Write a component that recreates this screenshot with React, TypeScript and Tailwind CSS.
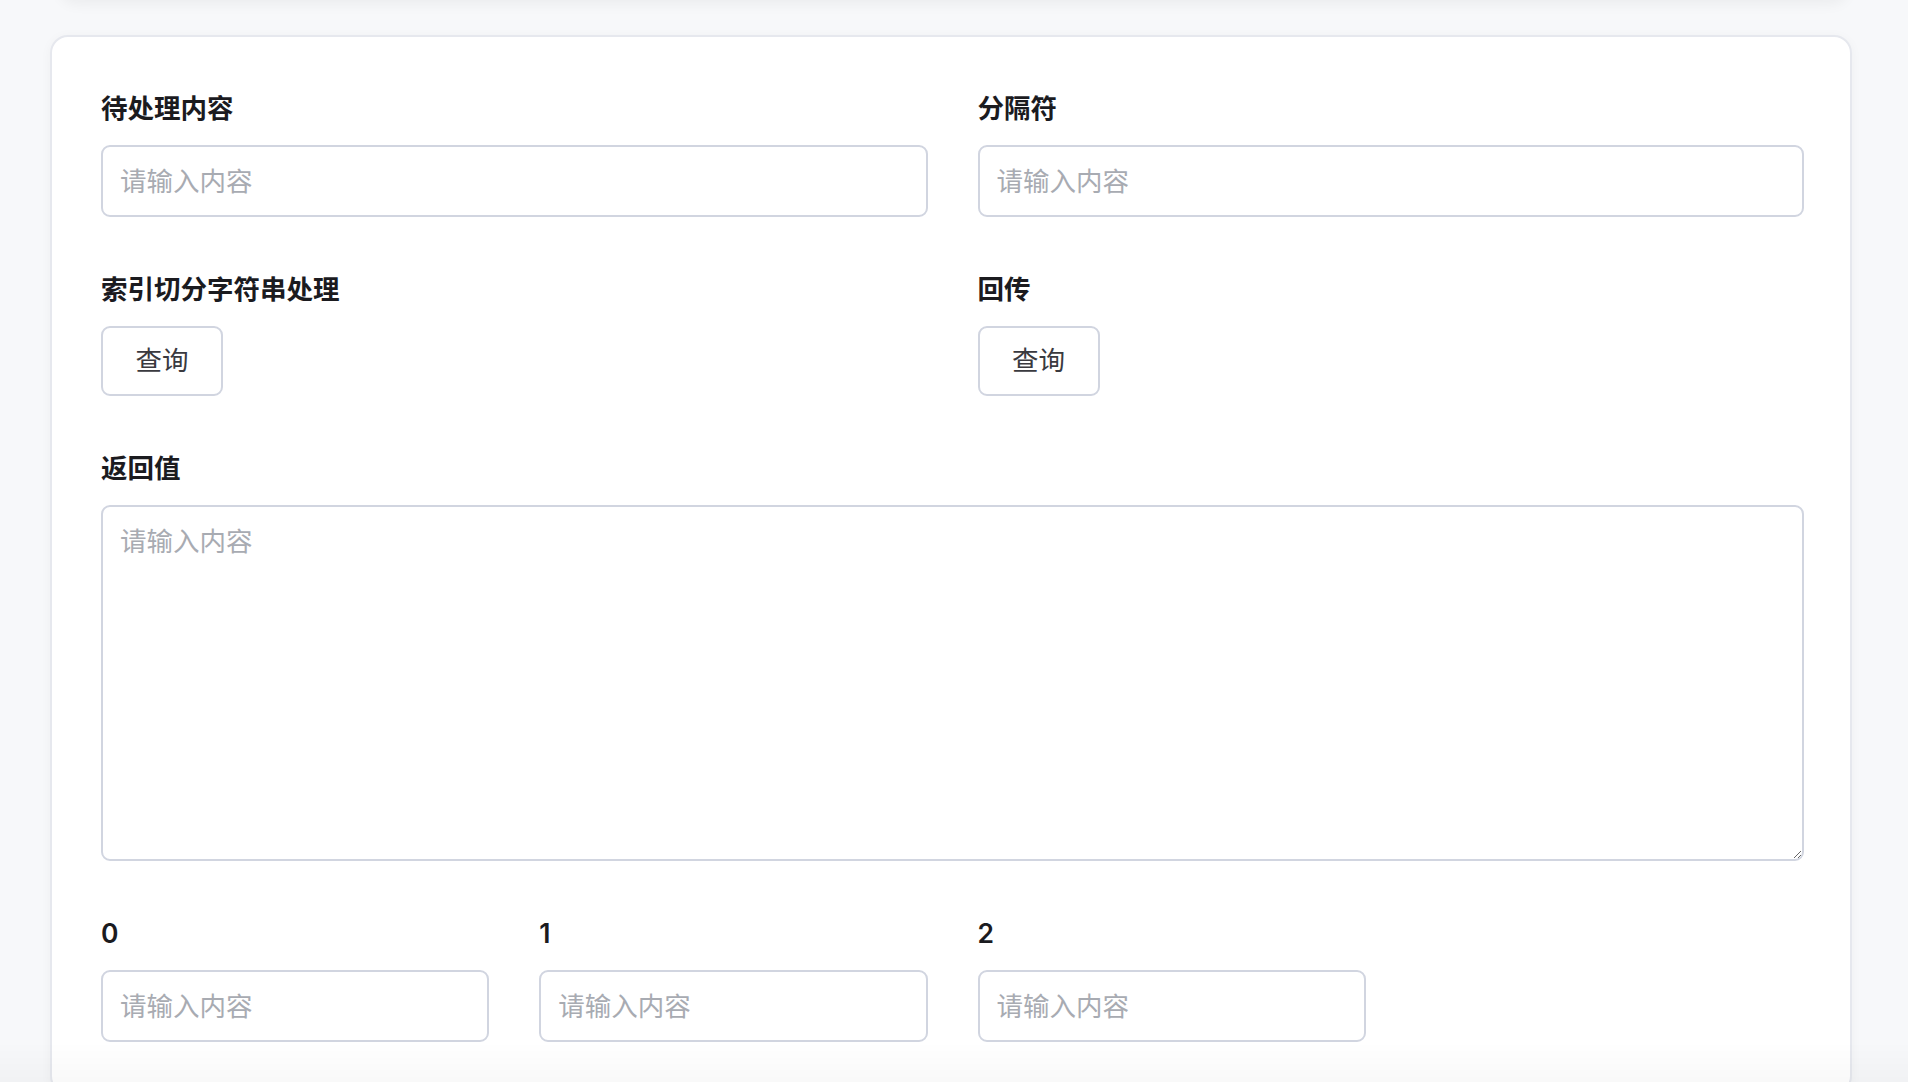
import React from "react";

const labelCls = "block h-[36px] leading-[36px] text-[26.5px] font-semibold text-[#1b1b1f] mb-[19px]";
const inputCls =
    "block w-full h-[72px] rounded-[9px] border-2 border-[#d1d5e0] bg-white px-[17px] text-[26.5px] text-[#303133] placeholder:text-[#a8abb2] outline-none";

function Field({ label, className = "" }: { label: string; className?: string }) {
    return (
        <div className={className}>
            <label className={labelCls}>{label}</label>
            <input className={inputCls} placeholder="请输入内容" />
        </div>
    );
}

function QueryField({ label, className = "" }: { label: string; className?: string }) {
    return (
        <div className={className}>
            <label className={labelCls}>{label}</label>
            <button className="h-[70px] w-[122px] rounded-[9px] border-2 border-[#d1d5e0] bg-white text-[26.5px] text-[#3a3a3f]">
                查询
            </button>
        </div>
    );
}

export default function App() {
    return (
        <div
            className="min-h-screen bg-[#f7f8fa] overflow-hidden"
            style={{ fontFamily: '"Inter", "Noto Sans CJK SC", sans-serif' }}
        >
            {/* bottom edge of the panel above, scrolled out of view */}
            <div className="mx-[60px] -mt-[20px] h-[20px] rounded-b-2xl bg-[#f7f8fa] shadow-[0_4px_14px_rgba(0,0,0,0.05)]"></div>

            <div className="pl-[50px] pr-[56px] pt-[35px]">
                <div className="rounded-[18px] border-2 border-[#e6e8ee] bg-white pl-[49px] pr-[46px] pt-[53px] pb-[50px] shadow-[0_2px_12px_rgba(0,0,0,0.04)]">
                    <div className="grid grid-cols-4 gap-x-[50px] gap-y-[54px]">
                        <Field label="待处理内容" className="col-span-2" />
                        <Field label="分隔符" className="col-span-2" />

                        <QueryField label="索引切分字符串处理" className="col-span-2" />
                        <QueryField label="回传" className="col-span-2" />

                        <div className="col-span-4">
                            <label className={labelCls}>返回值</label>
                            <textarea
                                className="block w-full h-[356px] rounded-[9px] border-2 border-[#d1d5e0] bg-white px-[17px] pt-[14px] text-[26.5px] leading-[40px] text-[#303133] placeholder:text-[#a8abb2] outline-none"
                                placeholder="请输入内容"
                            />
                        </div>

                        <Field label="0" />
                        <Field label="1" />
                        <Field label="2" />
                    </div>
                </div>
            </div>

            <div className="pointer-events-none fixed inset-x-0 bottom-0 h-[40px] bg-gradient-to-b from-transparent to-black/[0.025]"></div>
        </div>
    );
}
